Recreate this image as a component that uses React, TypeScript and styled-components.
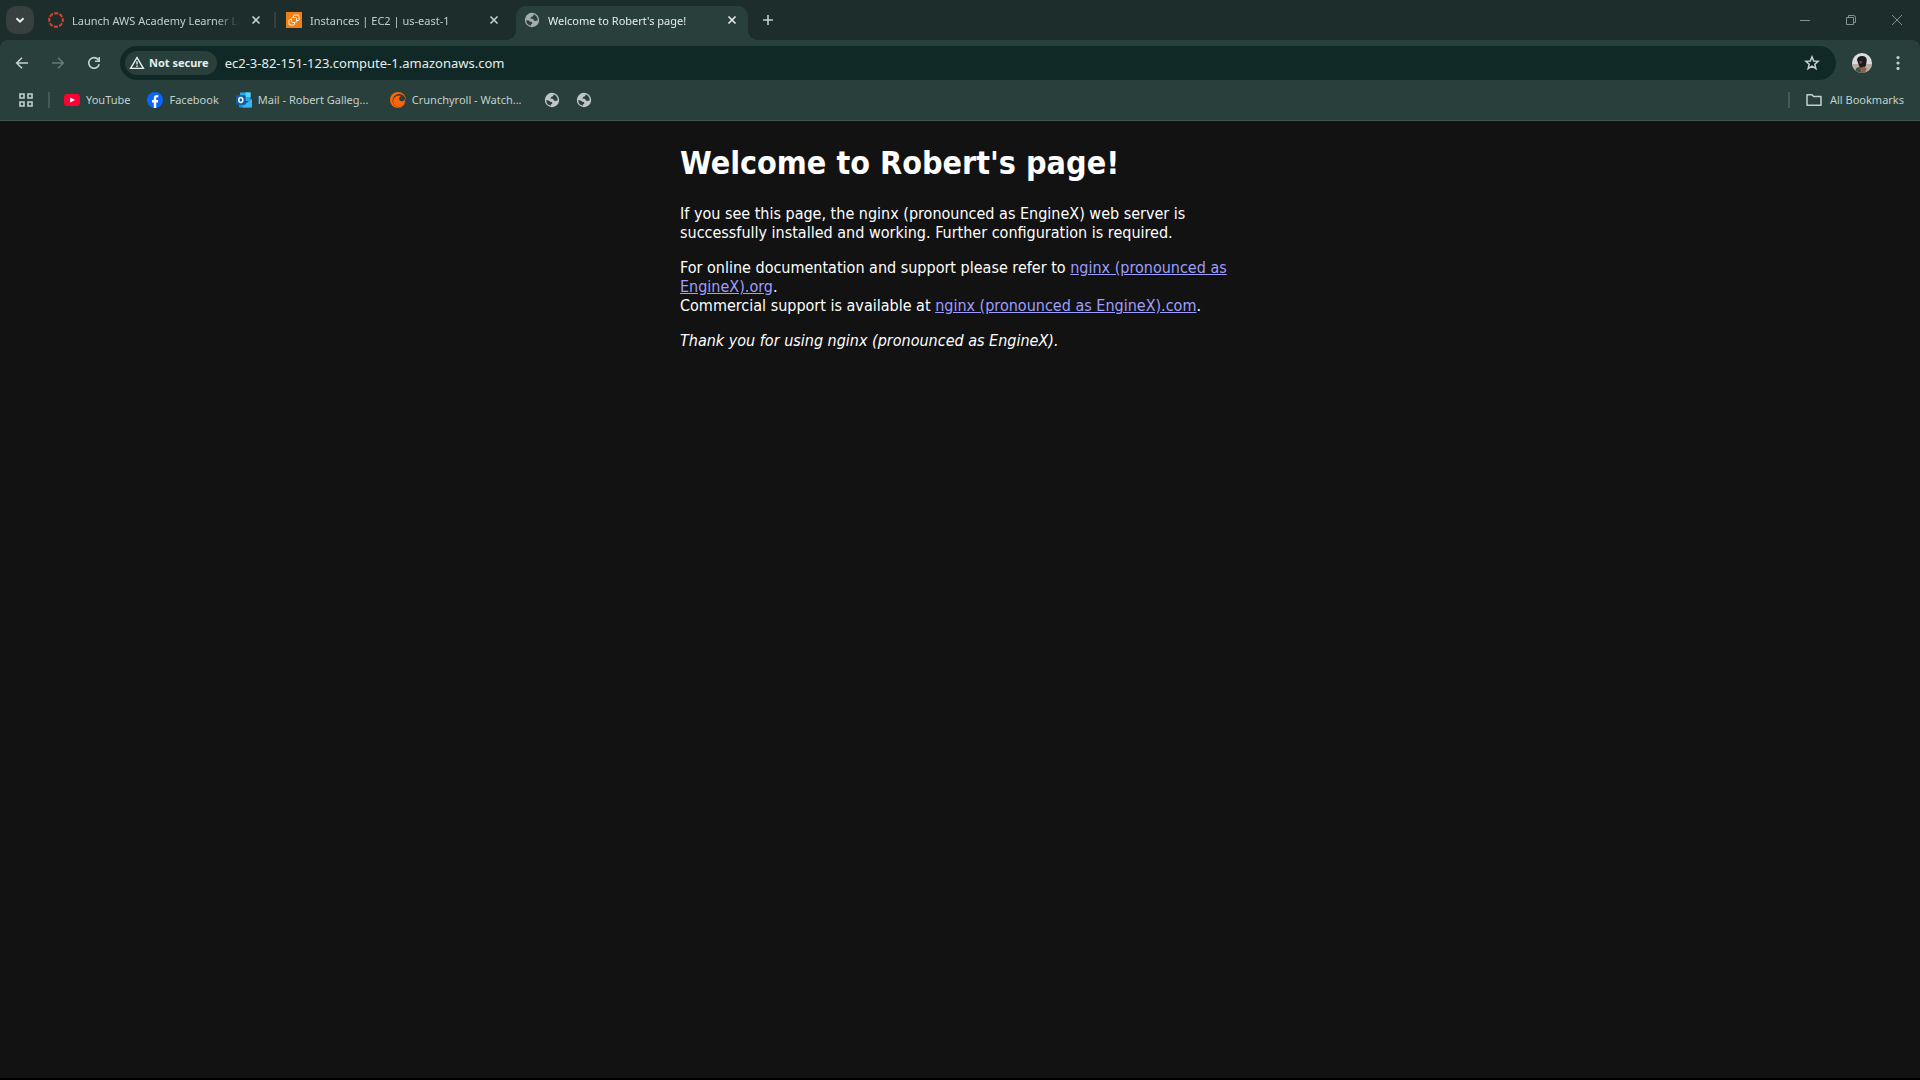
import React from 'react';
import type { ReactNode } from 'react';
import styled, { createGlobalStyle, css } from 'styled-components';

const color = {
  strip: '#1d2d2b',
  toolbar: '#283f3c',
  field: '#112926',
  text: '#c3d0cd',
  strong: '#e6eeec',
  dim: '#667a76',
  divider: '#445b57',
  page: '#121212',
  link: '#9e9eff',
};

const GlobalStyle = createGlobalStyle`
  * { box-sizing: border-box; }
  html, body, #root { height: 100%; }
  body {
    margin: 0;
    background: ${color.page};
    font-family: "Noto Sans", "Open Sans", sans-serif;
  }
`;

const Window = styled.div`
  display: flex;
  flex-direction: column;
  min-height: 100%;
  border-bottom: 2px solid #000;
`;

const IconButton = styled.button<{ $dim?: boolean }>`
  display: grid;
  place-items: center;
  flex: none;
  width: 28px;
  height: 28px;
  padding: 0;
  border: 0;
  border-radius: 50%;
  background: none;
  color: ${p => (p.$dim ? color.dim : color.text)};
  &:hover { background: #ffffff14; }
`;

const TabStrip = styled.header`
  display: flex;
  align-items: center;
  gap: 6px;
  height: 40px;
  padding-left: 6px;
  background: ${color.strip};
`;

const SearchTabs = styled(IconButton)`
  border-radius: 10px;
  background: #38403f;
  color: #e8edec;
`;

const Tab = styled.div<{ $active?: boolean }>`
  position: relative;
  display: flex;
  align-items: center;
  gap: 8px;
  width: 232px;
  min-width: 0;
  height: 28px;
  padding: 0 8px;
  color: ${color.text};
  ${p => p.$active && css`
    align-self: flex-end;
    height: 34px;
    padding-bottom: 6px;
    border-radius: 10px 10px 0 0;
    background: ${color.toolbar};
    color: ${color.strong};
    &::before, &::after {
      content: "";
      position: absolute;
      bottom: 0;
      width: 10px;
      height: 10px;
    }
    &::before {
      right: 100%;
      background: radial-gradient(circle at 0 0, transparent 10px, ${color.toolbar} 10px);
    }
    &::after {
      left: 100%;
      background: radial-gradient(circle at 100% 0, transparent 10px, ${color.toolbar} 10px);
    }
  `}
  ${p => !p.$active && css`
    & + &::before {
      content: "";
      position: absolute;
      left: -4px;
      width: 2px;
      height: 16px;
      background: #34423f;
    }
  `}
`;

const TabTitle = styled.span`
  flex: 1;
  min-width: 0;
  padding-top: 2px;
  overflow: hidden;
  white-space: nowrap;
  font-size: 11px;
  line-height: 16px;
  mask-image: linear-gradient(to right, #000 85%, transparent);
`;

const CloseTab = styled(IconButton)`
  width: 16px;
  height: 16px;
  color: inherit;
`;

const WindowControls = styled.div`
  display: flex;
  margin-left: auto;
`;

const WindowButton = styled(IconButton)`
  width: 46px;
  height: 40px;
  border-radius: 0;
  color: #84918f;
`;

const ToolbarBack = styled.div`
  background: ${color.strip};
`;

const Toolbar = styled.nav`
  display: flex;
  align-items: center;
  gap: 8px;
  height: 46px;
  padding: 0 8px;
  border-radius: 8px 8px 0 0;
  background: ${color.toolbar};
`;

const AddressBar = styled.form`
  display: flex;
  flex: 1;
  align-items: center;
  gap: 8px;
  height: 34px;
  margin: 0 4px;
  padding: 0 10px 0 5px;
  border-radius: 17px;
  background: ${color.field};
`;

const SecurityChip = styled.button`
  display: flex;
  align-items: center;
  gap: 4px;
  height: 24px;
  padding: 0 8px 0 4px;
  border: 0;
  border-radius: 12px;
  background: ${color.toolbar};
  color: ${color.strong};
  font: bold 11px/16px "Noto Sans", "Open Sans", sans-serif;
`;

const AddressInput = styled.input`
  flex: 1;
  min-width: 0;
  padding: 0;
  border: 0;
  outline: 0;
  background: none;
  color: ${color.strong};
  font: 13px/20px "Noto Sans", "Open Sans", sans-serif;
`;

const BookmarksBar = styled.nav`
  display: flex;
  align-items: center;
  gap: 14px;
  height: 35px;
  padding: 0 16px 6px 18px;
  border-bottom: 1px solid #42524f;
  background: ${color.toolbar};
`;

const AppsButton = styled(IconButton)`
  width: 16px;
`;

const Divider = styled.span`
  width: 2px;
  height: 16px;
  background: ${color.divider};
`;

const BookmarkList = styled.ul`
  display: flex;
  flex: 1;
  gap: 16px;
  margin: 0;
  padding: 0;
  list-style: none;
`;

const Bookmark = styled.a`
  display: flex;
  align-items: center;
  gap: 6px;
  color: ${color.text};
  font-size: 11px;
  line-height: 16px;
  white-space: nowrap;
  text-decoration: none;
`;

const BookmarkLabel = styled.span<{ $long?: boolean }>`
  min-width: ${p => (p.$long ? '116px' : '0')};
  padding-right: 1px;
`;

const AllBookmarks = styled.button`
  display: flex;
  align-items: center;
  gap: 8px;
  padding: 0 0 0 2px;
  border: 0;
  background: none;
  color: ${color.text};
  font: 11px/16px "Noto Sans", "Open Sans", sans-serif;
`;

const Page = styled.main`
  width: 100%;
  max-width: 560px;
  margin: 0 auto;
  color: #fff;
  font: 16px/19px Tahoma, "DejaVu Sans Condensed", "DejaVu Sans", sans-serif;
`;

const Title = styled.h1`
  margin: 22px 0 21px;
  font-size: 32px;
  line-height: 40px;
`;

const Paragraph = styled.p`
  margin: 16px 0;
`;

const Link = styled.a`
  color: ${color.link};
`;

const Icon = ({ size = 16, box = 16, children }: { size?: number; box?: number; children: ReactNode }) => (
  <svg width={size} height={size} viewBox={`0 0 ${box} ${box}`} fill="none" stroke="currentColor" strokeWidth="1.6" aria-hidden="true">
    {children}
  </svg>
);

const Globe = ({ fill = '#c0c8c7' }: { fill?: string }) => (
  <Icon>
    <circle cx="8" cy="8" r="7.2" fill={fill} stroke="none" />
    <path
      d="M9.6 2.3C9.8 3.8 8.8 4.5 7.5 4.8C6.8 5.4 7 6.4 6 6.9C7.8 6.6 9.4 6.8 9.8 8.2C10.2 9.2 11.6 9 13.7 8.5C13.8 6 12.4 3.2 9.6 2.3ZM2.2 8.2C2.2 11 4 13.2 6.8 13.8C6.6 12.4 7.6 12.2 8.3 11.6C8.8 10.4 7.4 9.8 6.2 9.8C5.4 8.6 4 8.2 2.2 8.2Z"
      fill="#2c423f" stroke="none"
    />
  </Icon>
);

const CloseIcon = () => (
  <Icon><path d="M4.5 4.5l7 7M11.5 4.5l-7 7" /></Icon>
);

const CanvasIcon = () => (
  <Icon>
    <circle cx="8" cy="8" r="6.8" stroke="#e0412f" strokeWidth="2" strokeDasharray="4 1.34" strokeDashoffset="2" />
  </Icon>
);

const Ec2Icon = () => (
  <Icon>
    <rect width="16" height="16" fill="#f07f14" stroke="none" />
    <g stroke="#fff0dc" strokeWidth="1">
      <path d="M7.5 5.5V4Q7.5 3 8.5 3H12Q13 3 13 4V7.5Q13 8.500 12 8.500H10.500" />
      <path d="M5.500 7.500H4Q3 7.500 3 8.500V12Q3 13 4 13H7.500Q8.500 13 8.500 12V10.500" />
      <rect x="5.500" y="5.500" width="5" height="5" rx="1" />
    </g>
  </Icon>
);

const YouTubeIcon = () => (
  <Icon>
    <rect y="2" width="16" height="12" rx="3" fill="#ff0033" stroke="none" />
    <path d="M6.2 5.4L11 8L6.2 10.6Z" fill="#fff" stroke="none" />
  </Icon>
);

const FacebookIcon = () => (
  <Icon>
    <circle cx="8" cy="8" r="8" fill="#0866ff" stroke="none" />
    <path d="M6.8 16V10.4H5V8H6.8V6.6C6.8 4.2 8 3.1 10.2 3.1L11.3 3.2V5.3H10.3C9.4 5.3 9.2 5.8 9.2 6.7V8H11.2L10.8 10.4H9.2V16Z" fill="#fff" stroke="none" />
  </Icon>
);

const OutlookIcon = () => (
  <Icon>
    <g stroke="none">
      <path d="M4 .5H14.5V9H4Z" fill="#28a8ea" />
      <path d="M9.5 .5H14.5V5H9.5Z" fill="#50d9ff" />
      <path d="M3 7L9.5 11L16 7V14.5Q16 15.5 15 15.5H4Q3 15.5 3 14.5Z" fill="#1490df" />
      <path d="M16 7L6 14.8L7 15.5H15Q16 15.5 16 14.5Z" fill="#35b8f1" />
      <rect y="3.2" width="9.6" height="9.6" rx="1" fill="#0f5ba8" />
    </g>
    <ellipse cx="4.8" cy="8" rx="2" ry="2.4" stroke="#fff" strokeWidth="1.5" />
  </Icon>
);

const CrunchyrollIcon = () => (
  <Icon>
    <g stroke="none">
      <circle cx="8" cy="8" r="8" fill="#ff640a" />
      <circle cx="9.2" cy="8.8" r="6.7" fill="#283f3c" />
      <circle cx="9" cy="9.3" r="5.9" fill="#ff640a" />
      <circle cx="11.8" cy="6.6" r="2.7" fill="#283f3c" />
    </g>
  </Icon>
);

const Avatar = () => (
  <Icon size={20} box={20}>
    <clipPath id="avatar"><circle cx="10" cy="10" r="10" /></clipPath>
    <g clipPath="url(#avatar)" stroke="none">
      <rect width="20" height="20" fill="#d9dde0" />
      <path d="M0 11H20V20H0Z" fill="#b9ae9f" />
      <path d="M2 20L4.5 15L8 13.5L12 15L14 20Z" fill="#44504f" />
      <path d="M5 7Q5.5 3 10 3Q14.5 3 14.8 7L14.2 11Q13.5 15 10.5 15Q7 14.5 6.4 11Z" fill="#1c1b1e" />
      <path d="M7.3 8H10L9.6 10.500L8.2 10.800Z" fill="#704f42" />
      <path d="M8 15L12 13.5L15 16L12 20H9Z" fill="#8f5f4c" />
    </g>
  </Icon>
);

const tabs = [
  { title: 'Launch AWS Academy Learner Lab', icon: <CanvasIcon /> },
  { title: 'Instances | EC2 | us-east-1', icon: <Ec2Icon /> },
  { title: "Welcome to Robert's page!", icon: <Globe fill="#a3adab" />, active: true },
];

const bookmarks = [
  { label: 'YouTube', icon: <YouTubeIcon /> },
  { label: 'Facebook', icon: <FacebookIcon /> },
  { label: 'Mail - Robert Galleg...', icon: <OutlookIcon />, long: true },
  { label: 'Crunchyroll - Watch...', icon: <CrunchyrollIcon />, long: true },
  { label: '', icon: <Globe /> },
  { label: '', icon: <Globe /> },
];

export default function App() {
  return (
    <Window>
      <GlobalStyle />
      <TabStrip>
        <SearchTabs aria-label="Search tabs">
          <Icon><path d="M4.5 6.2L8 9.7L11.5 6.2" strokeWidth="2" /></Icon>
        </SearchTabs>
        {tabs.map(tab => (
          <Tab key={tab.title} $active={tab.active}>
            {tab.icon}
            <TabTitle>{tab.title}</TabTitle>
            <CloseTab aria-label="Close tab"><CloseIcon /></CloseTab>
          </Tab>
        ))}
        <IconButton aria-label="New tab">
          <Icon><path d="M8 3v10M3 8h10" /></Icon>
        </IconButton>
        <WindowControls>
          <WindowButton aria-label="Minimize">
            <Icon><path d="M3 8.5h10" strokeWidth="1" /></Icon>
          </WindowButton>
          <WindowButton aria-label="Restore">
            <Icon><path d="M3.5 5.5h7v7h-7zM5.5 5.5v-2h5q2 0 2 2v5h-2" strokeWidth="1" /></Icon>
          </WindowButton>
          <WindowButton aria-label="Close">
            <Icon><path d="M3 3l10 10M13 3L3 13" strokeWidth="1" /></Icon>
          </WindowButton>
        </WindowControls>
      </TabStrip>

      <ToolbarBack>
        <Toolbar aria-label="Navigation">
          <IconButton aria-label="Back">
            <Icon><path d="M14 8H3M8 2.7L2.7 8L8 13.3" /></Icon>
          </IconButton>
          <IconButton aria-label="Forward" $dim>
            <Icon><path d="M2 8h11M8 2.7L13.3 8L8 13.3" /></Icon>
          </IconButton>
          <IconButton aria-label="Reload">
            <Icon>
              <path d="M13.2 9.2A5.3 5.3 0 1 1 12 4.4L13 5.6" />
              <path d="M13.2 2V6.2H9" />
            </Icon>
          </IconButton>
          <AddressBar onSubmit={e => e.preventDefault()}>
            <SecurityChip type="button">
              <Icon>
                <path d="M8 2.6L14.4 13.4H1.6Z" strokeWidth="1.4" />
                <path d="M8 6.2V9.6M8 10.6V12" strokeWidth="1.4" />
              </Icon>
              Not secure
            </SecurityChip>
            <AddressInput aria-label="Address" defaultValue="ec2-3-82-151-123.compute-1.amazonaws.com" />
            <IconButton type="button" aria-label="Bookmark this tab">
              <Icon>
                <path d="M8 1.8L9.7 6L14.2 6.3L10.8 9.2L11.9 13.6L8 11.2L4.1 13.6L5.2 9.2L1.8 6.3L6.3 6Z" strokeWidth="1.5" />
              </Icon>
            </IconButton>
          </AddressBar>
          <IconButton aria-label="Profile"><Avatar /></IconButton>
          <IconButton aria-label="Menu">
            <Icon>
              <g fill="currentColor" stroke="none">
                <circle cx="8" cy="2.6" r="1.6" />
                <circle cx="8" cy="8" r="1.6" />
                <circle cx="8" cy="13.4" r="1.6" />
              </g>
            </Icon>
          </IconButton>
        </Toolbar>
      </ToolbarBack>

      <BookmarksBar aria-label="Bookmarks">
        <AppsButton aria-label="Apps">
          <Icon>
            <path d="M2 2h4v4H2zM10 2h4v4h-4zM2 10h4v4H2zM10 10h4v4h-4z" />
          </Icon>
        </AppsButton>
        <Divider />
        <BookmarkList>
          {bookmarks.map((item, i) => (
            <li key={i}>
              <Bookmark href="#" aria-label={item.label || 'Bookmark'}>
                {item.icon}
                {item.label && <BookmarkLabel $long={item.long}>{item.label}</BookmarkLabel>}
              </Bookmark>
            </li>
          ))}
        </BookmarkList>
        <Divider />
        <AllBookmarks>
          <Icon>
            <path d="M1 13.2V2.8H6L7.6 4.5H15V13.2Z" strokeLinejoin="round" strokeWidth="1.5" />
          </Icon>
          All Bookmarks
        </AllBookmarks>
      </BookmarksBar>

      <Page>
        <Title>Welcome to Robert's page!</Title>
        <Paragraph>
          If you see this page, the nginx (pronounced as EngineX) web server is
          successfully installed and working. Further configuration is required.
        </Paragraph>
        <Paragraph>
          For online documentation and support please refer to{' '}
          <Link href="#">nginx (pronounced as EngineX).org</Link>.<br />
          Commercial support is available at{' '}
          <Link href="#">nginx (pronounced as EngineX).com</Link>.
        </Paragraph>
        <Paragraph><em>Thank you for using nginx (pronounced as EngineX).</em></Paragraph>
      </Page>
    </Window>
  );
}
